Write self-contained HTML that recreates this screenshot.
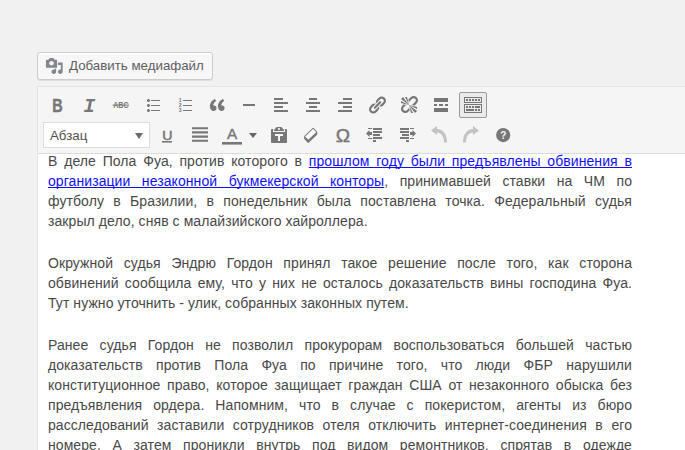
<!DOCTYPE html>
<html lang="ru">
<head>
<meta charset="utf-8">
<title>Редактор</title>
<style>
html,body{margin:0;padding:0;}
body{width:685px;height:450px;overflow:hidden;background:#f1f1f1;position:relative;font-family:"Liberation Sans",sans-serif;}
#media{position:absolute;left:37px;top:52px;width:176px;height:28px;box-sizing:border-box;border:1px solid #ccc;border-radius:3px;background:#f7f7f7;box-shadow:inset 0 1px 0 #fff,0 1px 0 rgba(0,0,0,.08);color:#5e5e5e;font-family:"Liberation Sans",sans-serif;font-size:13.3px;line-height:26px;}
#media span{position:absolute;left:31px;top:0;white-space:nowrap;}
#media svg{position:absolute;left:7px;top:4px;}
#ed{position:absolute;left:37px;top:86px;width:660px;height:380px;box-sizing:border-box;border:1px solid #e5e5e5;background:#fff;}
#tb{position:absolute;left:0;top:0;right:0;height:66px;background:#f5f5f5;border-bottom:1px solid #ddd;}
.ic{position:absolute;width:20px;height:20px;}
.ic svg{display:block;width:20px;height:20px;fill:#777;overflow:visible;}
.dis svg{fill:#c3c3c3;}
#sel{position:absolute;left:5px;top:35px;width:107px;height:26px;box-sizing:border-box;border:1px solid #ddd;background:#fff;font-size:13.3px;line-height:24px;color:#505050;}
#sel span{position:absolute;left:6px;top:1px;}
#sel i{position:absolute;right:6px;top:10px;width:0;height:0;border-left:4.5px solid transparent;border-right:4.5px solid transparent;border-top:6px solid #6a6a6a;}
#act{position:absolute;left:421px;top:5px;width:28px;height:26px;box-sizing:border-box;border:1px solid #999;border-radius:2px;background:#ebebeb;}
#txt{position:absolute;left:48px;top:151px;width:584px;font-family:"Liberation Sans",sans-serif;font-size:14px;line-height:20px;color:#484848;letter-spacing:0.075px;}
#txt p{margin:0 0 22px 0;}
#txt .l{display:block;text-align:justify;text-align-last:justify;white-space:nowrap;height:20px;}
#txt .e{text-align-last:left;}
#txt a{color:#1010f4;text-decoration:underline;text-decoration-skip-ink:none;text-decoration-thickness:1px;text-underline-offset:1px;}
</style>
</head>
<body>
<div id="media"><svg width="18.6" height="18" viewBox="0 0 20 20" preserveAspectRatio="none"><path fill="#82878c" d="M13 11V4c0-.55-.45-1-1-1h-1.670L9 1H5L3.670 3H2c-.550 0-1 .45-1 1v7c0 .55.450 1 1 1h10c.55 0 1-.45 1-1zM7 4.500c1.380 0 2.500 1.120 2.500 2.500S8.380 9.500 7 9.500 4.500 8.380 4.500 7 5.620 4.500 7 4.500zM14 6h5v10.500c0 1.380-1.120 2.500-2.500 2.500S14 17.880 14 16.500s1.120-2.500 2.500-2.500c.17 0 .34.020.5.050V9h-3V6zm-4 8.050V13h2v3.500c0 1.380-1.120 2.500-2.500 2.500S7 17.880 7 16.500 8.120 14 9.500 14c.17 0 .34.020.5.050z"/></svg><span>Добавить медиафайл</span></div>
<div id="ed">
<div id="tb">
<div id="act"></div>
<div id="sel"><span>Абзац</span><i></i></div>
</div>
</div>
<div id="icons">
<div class="ic" style="left:47px;top:95px"><svg viewBox="0 0 20 20"><text x="5.2" y="17" font-family="Liberation Sans, sans-serif" font-weight="bold" font-size="18" textLength="10.4" lengthAdjust="spacingAndGlyphs" stroke="#777" stroke-width="0.5">B</text></svg></div>
<div class="ic" style="left:79px;top:95px"><svg viewBox="0 0 20 20"><text x="4.400" y="17" font-family="Liberation Mono, monospace" font-weight="bold" font-style="italic" font-size="19.5">I</text></svg></div>
<div class="ic" style="left:111px;top:95px"><svg viewBox="0 0 20 20"><text x="2.2" y="13.2" font-family="Liberation Sans, sans-serif" font-weight="bold" font-size="8.8" textLength="15.4" lengthAdjust="spacingAndGlyphs">ABC</text><rect x="1.5" y="9.6" width="16.6" height="1"/></svg></div>
<div class="ic" style="left:143px;top:95px"><svg viewBox="0 0 20 20"><path d="M5.500 7C4.670 7 4 6.330 4 5.500 4 4.680 4.670 4 5.500 4 6.320 4 7 4.680 7 5.500 7 6.330 6.320 7 5.500 7zM8 5h9v1H8V5zm-2.500 7c-.830 0-1.500-.670-1.500-1.500C4 9.680 4.670 9 5.500 9c.82 0 1.500.68 1.500 1.500 0 .83-.68 1.500-1.500 1.500zM8 10h9v1H8v-1zm-2.500 7c-.830 0-1.500-.670-1.500-1.500 0-.820.670-1.500 1.500-1.500.82 0 1.500.68 1.500 1.500 0 .83-.68 1.500-1.500 1.500zM8 15h9v1H8v-1z"/></svg></div>
<div class="ic" style="left:175px;top:95px"><svg viewBox="0 0 20 20"><g font-family="Liberation Sans, sans-serif" font-weight="bold" font-size="5.2"><text x="3.8" y="7">1</text><text x="3.8" y="12">2</text><text x="3.8" y="17">3</text></g><path d="M8 5h9v1H8zM8 10h9v1H8zM8 15h9v1H8z"/></svg></div>
<div class="ic" style="left:207px;top:95px"><svg viewBox="0 0 20 20"><path d="M9.490 13.220c0-.740-.2-1.380-.610-1.900-.620-.780-1.830-.880-2.530-.720-.290-1.650 1.110-3.750 2.920-4.650L7.880 4c-2.730 1.300-5.420 4.280-4.960 8.050C3.210 14.430 4.590 16 6.540 16c.85 0 1.560-.25 2.120-.750s.83-1.180.83-2.030zm8.050 0c0-.740-.2-1.380-.610-1.900-.630-.780-1.830-.880-2.530-.720-.290-1.650 1.110-3.750 2.920-4.650L15.930 4c-2.730 1.300-5.410 4.280-4.950 8.050.29 2.380 1.660 3.950 3.610 3.950.85 0 1.560-.25 2.120-.750s.83-1.180.83-2.030z"/></svg></div>
<div class="ic" style="left:239px;top:95px"><svg viewBox="0 0 20 20"><path d="M4 9h12v2H4z"/></svg></div>
<div class="ic" style="left:271px;top:95px"><svg viewBox="0 0 20 20"><path d="M12 5V3H3v2h9zm5 4V7H3v2h14zm-5 4v-2H3v2h9zm5 4v-2H3v2h14z"/></svg></div>
<div class="ic" style="left:303px;top:95px"><svg viewBox="0 0 20 20"><path d="M14 5V3H6v2h8zm3 4V7H3v2h14zm-3 4v-2H6v2h8zm3 4v-2H3v2h14z"/></svg></div>
<div class="ic" style="left:335px;top:95px"><svg viewBox="0 0 20 20"><path d="M17 5V3H8v2h9zm0 4V7H3v2h14zm0 4v-2H8v2h9zm0 4v-2H3v2h14z"/></svg></div>
<div class="ic" style="left:367px;top:95px"><svg viewBox="0 0 20 20"><path d="M17.740 2.760c1.680 1.690 1.680 4.410 0 6.100l-1.530 1.520c-1.120 1.120-2.700 1.470-4.140 1.090l2.620-2.610.76-.77.76-.76c.84-.84.84-2.200 0-3.040-.84-.85-2.200-.85-3.040 0l-.77.76-3.380 3.380c-.37-1.440-.02-3.020 1.100-4.140l1.520-1.530c1.690-1.680 4.420-1.680 6.100 0zM8.590 13.430l5.340-5.340c.42-.42.42-1.100 0-1.520-.44-.43-1.130-.39-1.530 0l-5.330 5.340c-.42.42-.42 1.100 0 1.520.44.43 1.130.39 1.520 0zm-.76 2.290l4.140-4.150c.38 1.440.03 3.020-1.090 4.140l-1.520 1.530c-1.690 1.680-4.410 1.680-6.100 0-1.680-1.680-1.680-4.420 0-6.100l1.530-1.520c1.120-1.120 2.700-1.470 4.140-1.100l-4.140 4.150c-.85.84-.85 2.200 0 3.050.84.84 2.200.84 3.040 0z"/></svg></div>
<div class="ic" style="left:399px;top:95px"><svg viewBox="0 0 20 20"><path d="M17.740 2.260c1.680 1.690 1.680 4.410 0 6.100l-1.530 1.520c-.32.33-.69.58-1.080.77L13 10l1.690-1.640.76-.77.76-.76c.84-.84.84-2.200 0-3.040-.84-.85-2.200-.85-3.040 0l-.77.76-.76.76L10 7l-.65-2.140c.19-.38.44-.75.77-1.070l1.520-1.530c1.690-1.680 4.420-1.680 6.100 0zM2 4l8 6-6-8zm4-2l4 8-2-8H6zM2 6l8 4-8-2V6zm7.360 7.690L10 13l.74 2.350-1.380 1.390c-1.690 1.680-4.410 1.680-6.100 0-1.680-1.680-1.680-4.420 0-6.100l1.390-1.380L7 10l-.69.640-1.520 1.530c-.85.84-.85 2.200 0 3.040.84.85 2.200.85 3.040 0zM18 16l-8-6 6 8zm-4 2l-4-8 2 8h2zm4-4l-8-4 8 2v2z"/></svg></div>
<div class="ic" style="left:431px;top:95px"><svg viewBox="0 0 20 20"><path d="M17 7V3H3v4h14zM6 11V9H3v2h3zm6 0V9H8v2h4zm5 0V9h-3v2h3zm0 6v-4H3v4h14z"/></svg></div>
<div class="ic" style="left:463px;top:95px"><svg viewBox="0 0 20 20"><path d="M19 2v6H1V2h18zm-1 5V3H2v4h16zM5 4v2H3V4h2zm3 0v2H6V4h2zm3 0v2H9V4h2zm3 0v2h-2V4h2zm3 0v2h-2V4h2zm2 5v9H1V9h18zm-1 8v-7H2v7h16zM5 11v2H3v-2h2zm3 0v2H6v-2h2zm3 0v2H9v-2h2zm6 0v2h-5v-2h5zm-6 3v2H3v-2h8zm3 0v2h-2v-2h2zm3 0v2h-2v-2h2z"/></svg></div>
<div class="ic" style="left:157px;top:125px"><svg viewBox="0 0 20 20"><text x="5.3" y="14.5" font-family="Liberation Sans, sans-serif" font-size="13.6" textLength="10.2" lengthAdjust="spacingAndGlyphs" stroke="#777" stroke-width="0.55">U</text><rect x="5" y="16" width="10" height="1.6"/></svg></div>
<div class="ic" style="left:189px;top:125px"><svg viewBox="0 0 20 20"><path d="M3 2.150h16v2.100H3zM3 6.350h16v2.100H3zM3 10.550h16v2.100H3zM3 14.750h16v2.100H3z"/></svg></div>
<div class="ic" style="left:222px;top:125px"><svg viewBox="0 0 20 20"><text x="5.100" y="14.3" font-family="Liberation Sans, sans-serif" font-size="13.8" textLength="10.2" lengthAdjust="spacingAndGlyphs" stroke="#777" stroke-width="0.35">A</text><rect x="0" y="17" width="20" height="2.600"/></svg></div>
<div style="position:absolute;left:249px;top:133px;width:0;height:0;border-left:4px solid transparent;border-right:4px solid transparent;border-top:5px solid #666"></div>
<div class="ic" style="left:269px;top:125px"><svg viewBox="0 0 20 20"><path d="M12.380 2L15 5v1H5V5l2.640-3h4.740zM10 5c.55 0 1-.44 1-1 0-.55-.45-1-1-1s-1 .45-1 1c0 .56.450 1 1 1zm5.450-1H17c.55 0 1 .45 1 1v12c0 .56-.45 1-1 1H3c-.55 0-1-.44-1-1V5c0-.55.450-1 1-1h1.550L4 4.630V7h12V4.630zM14 11V9H6v2h3v5h2v-5h3z"/></svg></div>
<div class="ic" style="left:301px;top:125px"><svg viewBox="0 0 20 20"><path d="M3.800 11.400L12.200 3.550L15.600 7.200V9.400L7.200 17.250L3.800 13.600z" stroke="#777" stroke-width="1.300" stroke-linejoin="round"/><path d="M4.300 11.400L12.200 4.050L15.100 7.200L7.200 14.550z" fill="#fcfcfc" stroke="#fcfcfc" stroke-width="0.300" stroke-linejoin="round"/></svg></div>
<div class="ic" style="left:333px;top:125px"><svg viewBox="0 0 20 20"><text x="2.800" y="17" font-family="Liberation Sans, sans-serif" font-size="18.2" textLength="14.4" lengthAdjust="spacingAndGlyphs" stroke="#777" stroke-width="0.45">Ω</text></svg></div>
<div class="ic" style="left:365px;top:125px"><svg viewBox="0 0 20 20"><path d="M8 3h9v2H8zM8 6h9v2H8zM8 9h7v2H8zM8 12h9v2H8zM8 15h3v2H8zM3 3h4v1H3zM3 13h4v1H3zM1 8.500L4.500 5v2H7v3H4.500v2z"/></svg></div>
<div class="ic" style="left:397px;top:125px"><svg viewBox="0 0 20 20"><path d="M3 3h9v2H3zM3 6h9v2H3zM5 9h7v2H5zM3 12h9v2H3zM9 15h3v2H9zM13 3h4v1h-4zM13 13h4v1h-4zM19 8.500L15.500 5v2H13v3h2.500v2z"/></svg></div>
<div class="ic dis" style="left:429px;top:125px"><svg viewBox="0 0 20 20"><path d="M2 5.500L8 1v3c5.500 0 10 4.500 10 13.500h-3C15 11 12 7.500 8 7.500V10z"/></svg></div>
<div class="ic dis" style="left:461px;top:125px"><svg viewBox="0 0 20 20"><path d="M18 5.500L12 1v3C6.500 4 2 8.500 2 17.500h3C5 11 8 7.500 12 7.500V10z"/></svg></div>
<div class="ic" style="left:493px;top:125px"><svg viewBox="0 0 20 20"><circle cx="10.2" cy="10.1" r="7.1"/><text x="10.3" y="13.900" text-anchor="middle" font-family="Liberation Sans, sans-serif" font-weight="bold" font-size="10" fill="#f5f5f5">?</text></svg></div>
</div>
<div id="txt">
<p><span class="l">В деле Пола Фуа, против которого в <a>прошлом году были предъявлены обвинения в</a></span>
<span class="l"><a>организации незаконной букмекерской конторы</a>, принимавшей ставки на ЧМ по</span>
<span class="l">футболу в Бразилии, в понедельник была поставлена точка. Федеральный судья</span>
<span class="l e">закрыл дело, сняв с малайзийского хайроллера.</span></p>
<p><span class="l">Окружной судья Эндрю Гордон принял такое решение после того, как сторона</span>
<span class="l">обвинений сообщила ему, что у них не осталось доказательств вины господина Фуа.</span>
<span class="l e">Тут нужно уточнить - улик, собранных законных путем.</span></p>
<p><span class="l">Ранее судья Гордон не позволил прокурорам воспользоваться большей частью</span>
<span class="l">доказательств против Пола Фуа по причине того, что люди ФБР нарушили</span>
<span class="l">конституционное право, которое защищает граждан США от незаконного обыска без</span>
<span class="l">предъявления ордера. Напомним, что в случае с покеристом, агенты из бюро</span>
<span class="l">расследований заставили сотрудников отеля отключить интернет-соединения в его</span>
<span class="l">номере. А затем проникли внутрь под видом ремонтников, спрятав в одежде</span>
<span class="l">скрытые камеры, чтобы получить доказательства незаконной деятельности Фуа и</span></p>
</div>
</body>
</html>
